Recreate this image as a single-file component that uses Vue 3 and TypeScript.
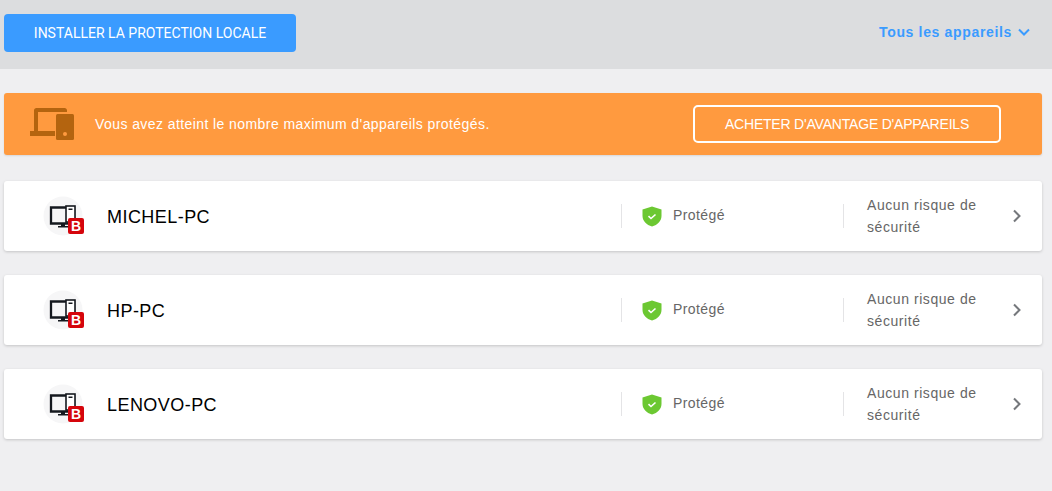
<script setup lang="ts">
const devices: string[] = ['MICHEL-PC', 'HP-PC', 'LENOVO-PC']
</script>

<template>
  <div class="page">
    <header class="top">
      <button class="install">INSTALLER LA PROTECTION LOCALE</button>
      <div class="filter">
        <span>Tous les appareils</span>
        <svg width="12" height="8" viewBox="0 0 12 8"><path d="M1 1.500 6 6.500 11 1.500" fill="none" stroke="#3a9bff" stroke-width="2" /></svg>
      </div>
    </header>
    <main class="content">
      <section class="banner">
        <svg class="banner-icon" width="44" height="32" viewBox="0 0 44 32">
          <path d="M4 23V2.500C4 1 5 0 6.500 0H34.500C36 0 37 1 37 2.500V4H8V23H25V28H0V23Z" fill="#b4640f" />
          <rect x="26" y="6" width="18" height="26" rx="1.500" fill="#b4640f" />
          <circle cx="35" cy="26" r="2" fill="#ff9a3f" />
        </svg>
        <p class="banner-text">Vous avez atteint le nombre maximum d'appareils protégés.</p>
        <button class="buy">ACHETER D'AVANTAGE D'APPAREILS</button>
      </section>
      <article v-for="d in devices" :key="d" class="card">
        <div class="avatar">
          <svg width="40" height="40" viewBox="0 0 40 40">
            <circle cx="20" cy="20" r="19.500" fill="#f6f6f7" />
            <path d="M8 11.500h23v16H8z" fill="none" stroke="#14181e" stroke-width="2.300" />
            <path d="M15 31.500h10v-1.500h-3v-2h-4v2h-3z" fill="#14181e" />
            <rect x="23" y="10" width="9" height="16" fill="#fff" stroke="#14181e" stroke-width="1.600" />
            <rect x="25.500" y="12.500" width="4" height="1.500" fill="#14181e" />
          </svg>
          <span class="badge">B</span>
        </div>
        <div class="name">{{ d }}</div>
        <div class="status">
          <svg width="20" height="21" viewBox="0 0 20 21">
            <path d="M10 .500 19.500 3.500V10C19.500 15 15.500 19 10 20.500 4.500 19 .500 15 .500 10V3.500Z" fill="#6cc832" />
            <path d="M6.500 10.200 9 12.500 13.500 8.500" fill="none" stroke="#fff" stroke-width="1.600" />
          </svg>
          <span class="status-text">Protégé</span>
        </div>
        <div class="risk">
          <span class="risk-text">Aucun risque de sécurité</span>
          <svg width="10" height="14" viewBox="0 0 10 14"><path d="M2 1.500 7.500 7 2 12.500" fill="none" stroke="#75787c" stroke-width="2" /></svg>
        </div>
      </article>
    </main>
  </div>
</template>

<style scoped>
.page {
  width: 1052px;
  height: 491px;
  overflow: hidden;
  background: #efeff1;
  font-family: "Liberation Sans", Arial, sans-serif;
}
.top {
  height: 69px;
  box-sizing: border-box;
  background: #dcdddf;
  padding: 14px 22px 0 4px;
  display: flex;
  justify-content: space-between;
  align-items: flex-start;
}
.install {
  width: 292px;
  height: 38px;
  border: 0;
  border-radius: 4px;
  background: #3a9bff;
  color: #fff;
  font: 14px Roboto, sans-serif;
  padding: 0;
}
.filter {
  display: flex;
  align-items: center;
  gap: 6px;
  height: 36px;
  color: #3a9bff;
  font-size: 14px;
  font-weight: 700;
  letter-spacing: 0.66px;
}
.content {
  padding: 24px 10px 0 4px;
  display: flex;
  flex-direction: column;
  gap: 24px;
}
.banner {
  height: 62px;
  box-sizing: border-box;
  margin-bottom: 2px;
  background: #ff9a3f;
  border-radius: 3px;
  box-shadow: 0 1px 2px rgba(0, 0, 0, 0.1);
  display: flex;
  align-items: center;
  padding-left: 26px;
}
.banner-icon { flex: none; }
.banner-text {
  margin: 0 0 0 21px;
  width: 598px;
  color: #fff;
  font-size: 14px;
  letter-spacing: 0.42px;
}
.buy {
  width: 308px;
  height: 38px;
  box-sizing: border-box;
  background: transparent;
  border: 2px solid #fff;
  border-radius: 5px;
  color: #fff;
  font: 14px "Liberation Sans", Arial, sans-serif;
  letter-spacing: -0.2px;
  padding: 0;
}
.card {
  height: 70px;
  background: #fff;
  border-radius: 3px;
  box-shadow: 0 1px 3px rgba(0, 0, 0, 0.18);
  display: flex;
  align-items: center;
}
.avatar {
  position: relative;
  width: 40px;
  height: 40px;
  margin-left: 39px;
  flex: none;
}
.avatar svg { display: block; }
.badge {
  position: absolute;
  left: 25px;
  top: 22px;
  width: 16px;
  height: 16px;
  border-radius: 2px;
  background: #d5050c;
  color: #fff;
  font: 700 14px/16px "Liberation Sans", Arial, sans-serif;
  text-align: center;
}
.name {
  margin: 2px 0 0 24px;
  width: 514px;
  color: #000;
  font-size: 18px;
  letter-spacing: 0.45px;
}
.status {
  width: 222px;
  height: 24px;
  box-sizing: border-box;
  border-left: 1px solid #e4e4e6;
  padding-left: 20px;
  display: flex;
  align-items: center;
  gap: 11px;
  color: #666;
  font-size: 14px;
  letter-spacing: 0.42px;
}
.status-text { margin-bottom: 2px; }
.risk {
  flex: 1;
  height: 24px;
  box-sizing: border-box;
  border-left: 1px solid #e4e4e6;
  padding-left: 23px;
  padding-right: 20px;
  display: flex;
  align-items: center;
  justify-content: space-between;
  color: #666;
  font-size: 14px;
  letter-spacing: 0.56px;
  line-height: 22px;
}
.risk-text { width: 120px; flex: none; }
</style>
